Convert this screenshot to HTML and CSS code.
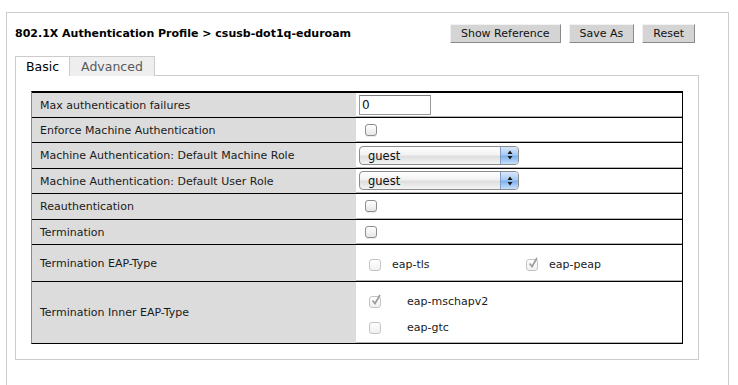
FILE: index.html
```html
<!DOCTYPE html>
<html>
<head>
<meta charset="utf-8">
<link rel="stylesheet" href="styles.css">
</head>
<body>
<div class="panel">
  <div class="header">
    <h1 class="title">802.1X Authentication Profile &gt; csusb-dot1q-eduroam</h1>
    <div class="actions">
      <button class="btn">Show Reference</button>
      <button class="btn">Save As</button>
      <button class="btn">Reset</button>
    </div>
  </div>
  <div class="tabs">
    <span class="tab active">Basic</span>
    <span class="tab">Advanced</span>
  </div>
  <div class="tabpanel">
    <div class="grid">
      <div class="row h25">
        <div class="label">Max authentication failures</div>
        <div class="value"><span class="input">0</span></div>
      </div>
      <div class="row h25">
        <div class="label">Enforce Machine Authentication</div>
        <div class="value"><span class="cb"></span></div>
      </div>
      <div class="row h26">
        <div class="label">Machine Authentication: Default Machine Role</div>
        <div class="value"><span class="select"><span class="select-text">guest</span><span class="select-arrow"><svg width="8" height="12" viewBox="0 0 8 12"><path d="M4 1.5 L6.5 5 L1.5 5 Z M4 10.5 L6.5 7 L1.5 7 Z" fill="#1a1a1a"/></svg></span></span></div>
      </div>
      <div class="row h25">
        <div class="label">Machine Authentication: Default User Role</div>
        <div class="value"><span class="select"><span class="select-text">guest</span><span class="select-arrow"><svg width="8" height="12" viewBox="0 0 8 12"><path d="M4 1.5 L6.5 5 L1.5 5 Z M4 10.5 L6.5 7 L1.5 7 Z" fill="#1a1a1a"/></svg></span></span></div>
      </div>
      <div class="row h26">
        <div class="label">Reauthentication</div>
        <div class="value"><span class="cb"></span></div>
      </div>
      <div class="row h25">
        <div class="label">Termination</div>
        <div class="value"><span class="cb"></span></div>
      </div>
      <div class="row h37">
        <div class="label">Termination EAP-Type</div>
        <div class="value eap">
          <span class="opt"><span class="cb dim"></span><span class="opt-text">eap-tls</span></span>
          <span class="opt"><span class="cb dim"><svg class="tick" width="14" height="14" viewBox="0 0 14 14"><path d="M3.5 7.5 L6 10.5 L11 2" fill="none" stroke="#9a9a9a" stroke-width="1.6"/></svg></span><span class="opt-text">eap-peap</span></span>
        </div>
      </div>
      <div class="row h62">
        <div class="label">Termination Inner EAP-Type</div>
        <div class="value inner">
          <span class="opt"><span class="cb dim"><svg class="tick" width="14" height="14" viewBox="0 0 14 14"><path d="M3.5 7.5 L6 10.5 L11 2" fill="none" stroke="#9a9a9a" stroke-width="1.6"/></svg></span><span class="opt-text">eap-mschapv2</span></span>
          <span class="opt"><span class="cb dim"></span><span class="opt-text">eap-gtc</span></span>
        </div>
      </div>
    </div>
  </div>
</div>
</body>
</html>
```

FILE: styles.css
```css
html, body {
  margin: 0;
  padding: 0;
  background: #fff;
}
body {
  font-family: "DejaVu Sans", Verdana, sans-serif;
  font-size: 11px;
  color: #1a1a1a;
  overflow: hidden;
}
.panel {
  box-sizing: border-box;
  margin: 12px 0 0 6px;
  width: 723px;
  height: 373px;
  border: 1px solid #cccccc;
  border-bottom: none;
}
.header {
  display: flex;
  align-items: center;
  justify-content: space-between;
  padding: 11px 33px 0 8px;
  height: 19px;
}
.title {
  margin: 0;
  font-size: 11px;
  font-weight: bold;
  color: #000;
}
.actions {
  display: flex;
  gap: 8px;
}
.btn {
  font-family: "DejaVu Sans", Verdana, sans-serif;
  font-size: 11px;
  color: #111;
  height: 19px;
  padding: 0 10px;
  background: #d4d4d4;
  border: 1px solid;
  border-color: #f2f2f2 #8a8a8a #8a8a8a #f2f2f2;
  border-radius: 0;
  line-height: 17px;
}
.tabs {
  display: flex;
  margin: 13px 0 0 8px;
  height: 19px;
  position: relative;
  z-index: 1;
}
.tab {
  box-sizing: border-box;
  height: 20px;
  border: 1px solid #cccccc;
  border-bottom: none;
  font-size: 12.5px;
  line-height: 20px;
  padding: 0 10px;
  color: #5a5a5a;
  background: #eeeeee;
}
.tab.active {
  background: #fff;
  color: #000;
  border-right: none;
}
.tab + .tab {
  padding: 0 11px 0 11px;
}
.tabpanel {
  margin-left: 8px;
  width: 652px;
  height: 253px;
  padding: 15px;
  border: 1px solid #cccccc;
}
.grid {
  border: 1px solid #000;
  border-left-color: #8a8a8a;
}
.row {
  display: grid;
  grid-template-columns: 324px 1fr;
  border-top: 1px solid #000;
  box-sizing: border-box;
}
.h25 { height: 25px; }
.h26 { height: 26px; }
.h37 { height: 37px; }
.h62 { height: 62px; }
.label {
  background: #dcdcdc;
  padding-left: 8px;
  display: flex;
  align-items: center;
}
.value {
  border-bottom: 1px solid #b4b4b4;
  display: flex;
  align-items: center;
  padding-left: 3px;
}
.input {
  box-sizing: border-box;
  width: 72px;
  height: 20px;
  border: 1px solid #9a9a9a;
  border-top-color: #7a7a7a;
  font-size: 12px;
  line-height: 18px;
  padding-left: 2px;
  color: #111;
}
.cb {
  box-sizing: border-box;
  display: inline-block;
  position: relative;
  width: 12px;
  height: 12px;
  margin-left: 6px;
  border: 1px solid #8e8e8e;
  border-radius: 3px;
  background: linear-gradient(#ffffff, #e6e6e6);
  box-shadow: 0 1px 0 rgba(0,0,0,0.08);
}
.cb.dim {
  border-color: #c4c4c4;
  background: linear-gradient(#ffffff, #f0f0f0);
  box-shadow: none;
  margin-left: 0;
}
.tick {
  position: absolute;
  left: -1px;
  top: -4px;
}
.select {
  box-sizing: border-box;
  display: flex;
  width: 160px;
  height: 19px;
  border: 1px solid #8c8c8c;
  border-radius: 4px;
  background: linear-gradient(#ffffff 0%, #f2f2f2 45%, #dedede 55%, #f4f4f4 100%);
  overflow: hidden;
}
.select-text {
  flex: 1;
  font-size: 11.5px;
  line-height: 18px;
  padding-left: 8px;
  color: #111;
}
.select-arrow {
  width: 17px;
  display: flex;
  align-items: center;
  justify-content: center;
  border-left: 1px solid #7d9cc8;
  background: linear-gradient(#d8e8fb 0%, #a9cbf3 45%, #7fb2ee 55%, #c9e0fa 100%);
}
.eap {
  display: grid;
  grid-template-columns: 157px auto;
  padding-left: 13px;
  padding-top: 5px;
  align-items: center;
}
.opt {
  display: flex;
  align-items: center;
}
.eap .opt-text {
  margin-left: 11px;
}
.inner {
  flex-direction: column;
  align-items: flex-start;
  justify-content: center;
  padding-left: 13px;
  padding-top: 6px;
  gap: 14px;
}
.inner .opt-text {
  margin-left: 26px;
}
.opt-text {
  font-size: 11px;
  line-height: 12px;
}
```
